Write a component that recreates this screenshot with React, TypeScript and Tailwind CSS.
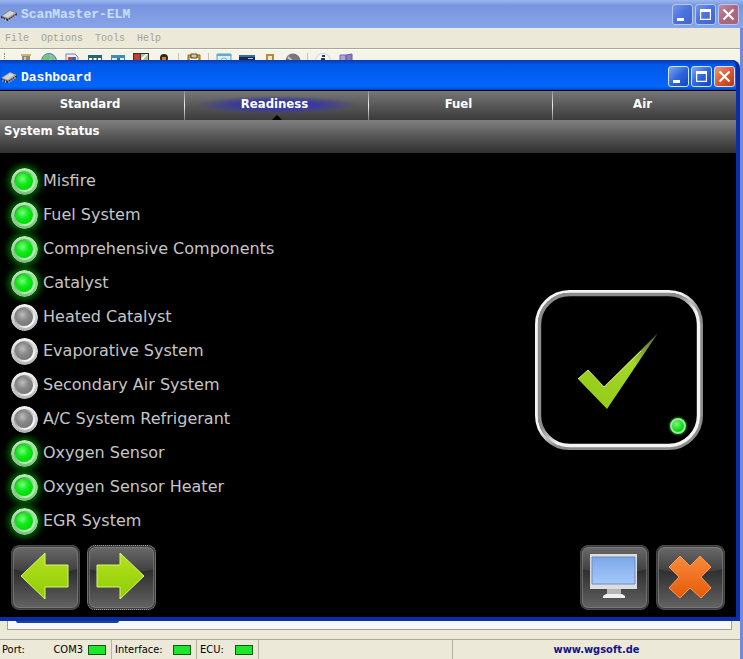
import React from 'react';
import clsx from 'clsx';

interface Monitor {
    label: string;
    ready: boolean;
}

const MONITORS: Monitor[] = [
    { label: 'Misfire', ready: true },
    { label: 'Fuel System', ready: true },
    { label: 'Comprehensive Components', ready: true },
    { label: 'Catalyst', ready: true },
    { label: 'Heated Catalyst', ready: false },
    { label: 'Evaporative System', ready: false },
    { label: 'Secondary Air System', ready: false },
    { label: 'A/C System Refrigerant', ready: false },
    { label: 'Oxygen Sensor', ready: true },
    { label: 'Oxygen Sensor Heater', ready: true },
    { label: 'EGR System', ready: true },
];

const TABS = ['Standard', 'Readiness', 'Fuel', 'Air'];
const MENUS = ['File', 'Options', 'Tools', 'Help'];

const ChipIcon: React.FC = () => (
    <svg viewBox="0 0 16 16" className="h-4 w-4 shrink-0">
        <path d="m0 9 9-6 7 3v2l-9 6-7-3z" fill="#2c2c30" />
        <path d="m0 9 9-6 7 3-9 6z" fill="#a4a7ac" />
        <path d="m2 9 7-5 4.500 2L7 10.500z" fill="#d3d5d9" />
        <path d="M2 10.500v2M4.500 11.500v2M8 12v2M10 10.700v2M12 9.400v2M14 8v2" stroke="#e0e0e0" strokeWidth=".9" />
    </svg>
);

const CAPTION_ICONS = {
    minimize: <path d="M5 14h7v3H5z" fill="#fff" />,
    maximize: <path d="M5 5h11v11H5zM6.200 8v6.800h8.600V8z" fill="#fff" fillRule="evenodd" />,
    close: <path d="m5.500 5.500 10 10m0-10-10 10" stroke="#fff" strokeWidth="2.200" />,
};

interface CaptionButtonsProps {
    active?: boolean;
}

const CaptionButtons: React.FC<CaptionButtonsProps> = ({ active = false }) => (
    <div className="ml-auto flex gap-0.5">
        {(['minimize', 'maximize', 'close'] as const).map(kind => (
            <button
                key={kind}
                type="button"
                aria-label={kind}
                className={clsx(
                    'h-[21px] w-[21px] overflow-hidden rounded-[3px] border',
                    active ? 'border-[#d5e4ff]' : 'border-[#b6c8f4]',
                    kind === 'close'
                        ? active
                            ? 'bg-linear-to-br from-[#ee9478] via-[#dd5935] to-[#b8350f]'
                            : 'bg-linear-to-br from-[#bb8ca5] via-[#b0657a] to-[#a3647c]'
                        : active
                            ? 'bg-linear-to-br from-[#7da5f4] via-[#2f66dc] to-[#1244c0]'
                            : 'bg-linear-to-br from-[#7396e9] via-[#4a72e0] to-[#4266c4]'
                )}
            >
                <svg viewBox="1 1 19 19" className="h-[19px] w-[19px]">{CAPTION_ICONS[kind]}</svg>
            </button>
        ))}
    </div>
);

const TOOL_GROUPS = [
    [
        { name: 'Connect', art: <><path d="M4 3h8v13H4z" fill="#8c887e" /><path d="M6 4h2v12H6z" fill="#c9c6bc" /><path d="M3 1h10v2H3z" fill="#c9b76a" /></> },
        { name: 'Internet', art: <><circle cx="8" cy="8" r="7.500" fill="#8fbde0" stroke="#52779b" /><path d="M2 6c2-5 5-3 6-4l2 3-4 3zM11 2l3 4-3 1z" fill="#79c45e" /></> },
        { name: 'Report', art: <><path d="M2 1h9l3 3v12H2z" fill="#e8effb" stroke="#7a83a0" /><path d="M4 4h4v5H4z" fill="#c04a40" /><path d="M8 4h4v5H8z" fill="#3d65ad" /></> },
        { name: 'Gauges', art: <><path d="M1 2h14v14H1z" fill="#24656f" /><path d="M2 5h3v3H2zM6.500 5h3v3h-3zM11 5h3v3h-3z" fill="#fff" /></> },
        { name: 'Graph', art: <><path d="M1 2h14v14H1z" fill="#3d8eb1" /><path d="M2 5h12v8H2z" fill="#d4eff5" /><path d="M7 5h3v3H7z" fill="#31788f" /></> },
        { name: 'Monitors', art: <><path d="M0 0h16v16H0z" fill="#442a28" /><path d="M1 1h6v6H1z" fill="#c33d32" /><path d="M8 1h7v7H8z" fill="#9cca91" /><path d="m8 5 5-4h2L9 8z" fill="#eef5e9" /></> },
        { name: 'Driver', art: <><circle cx="8" cy="5" r="4" fill="#2f2722" /><path d="M6 4h4v4H6zM3 9h9v6H3z" fill="#d47c34" /></> },
    ],
    [
        { name: 'Clipboard', art: <><path d="M2 2h12v14H2z" fill="#d49a39" stroke="#8b6327" /><path d="M4 5h8v9H4z" fill="#f4f4f4" /><path d="M5 1h6v4H5z" fill="#d8c89a" stroke="#554a33" /></> },
    ],
    [
        { name: 'Search', art: <><path d="M1 1h14v14H1z" fill="#d5edf5" stroke="#5a9fba" /><path d="M1 1h14v2H1z" fill="#68a8c8" /><circle cx="8" cy="8" r="3" fill="#edf6f8" stroke="#7eb6c5" /></> },
        { name: 'Terminal', art: <><path d="M0 2h16v12H0z" fill="#132b4c" /><path d="M0 2h16v2H0z" fill="#386ba0" /><path d="M9 5h5v1H9z" fill="#bacbdd" /></> },
        { name: 'Device', art: <><path d="M4 1h8v14H4z" fill="#b38b43" /><path d="M6 3h4v6H6z" fill="#f3e6bc" /></> },
        { name: 'Stop', art: <><circle cx="8" cy="8" r="7.500" fill="#77777c" /><path d="m3 4 9 9" stroke="#c5c5c8" strokeWidth="2" /></> },
    ],
    [
        { name: 'About', art: <><circle cx="8" cy="8" r="7.500" fill="#f4f7fa" stroke="#cbd1da" /><path d="M7 2h3v2H7zM6 5h4v7H6z" fill="#263c62" /></> },
        { name: 'Exit', art: <><path d="M2 2h6v13H2z" fill="#aaa3dc" stroke="#7265ab" /><path d="m8 2 6-1v14l-6-1z" fill="#8a7cc7" stroke="#6559a0" /></> },
    ],
];

const Toolbar: React.FC = () => (
    <div className="flex h-[11px] items-start overflow-hidden border-t border-white bg-[#f5f4e9] pt-[3px]">
        <span className="mr-2 ml-1 h-4 w-0.5 border-l border-dotted border-[#8c8c84]" />
        {TOOL_GROUPS.map((group, i) => (
            <React.Fragment key={i}>
                {i > 0 && <span className="mx-[3px] h-4 w-px shrink-0 bg-[#c5c2b2]" />}
                {group.map(tool => (
                    <button key={tool.name} type="button" aria-label={tool.name} className="flex w-[23px] shrink-0 justify-center">
                        <svg viewBox="0 0 16 16" className="h-4 w-4">{tool.art}</svg>
                    </button>
                ))}
            </React.Fragment>
        ))}
    </div>
);

const LED_COLORS = {
    on: { rim: ['#aef2ae', '#7fc080'], groove: ['#4fa052', '#c0ffc0'], lens: ['#7dff7d', '#12ea1e', '#00dc0a'] },
    off: { rim: ['#f4f4f4', '#b4b4b4'], groove: ['#808080', '#ffffff'], lens: ['#bdbdbd', '#8a8a8a', '#7a7a7a'] },
};

const Led: React.FC<{ on: boolean }> = ({ on }) => {
    const state = on ? 'on' : 'off';
    const { rim, groove, lens } = LED_COLORS[state];

    return (
        <svg
            viewBox="0 0 27 27"
            className={clsx('h-[27px] w-[27px] shrink-0 rounded-full', on && 'shadow-[0_0_7px_2px_#087c08]')}
        >
            <defs>
                <linearGradient id={`rim-${state}`} x2="0" y2="1">
                    <stop stopColor={rim[0]} />
                    <stop offset="1" stopColor={rim[1]} />
                </linearGradient>
                <linearGradient id={`groove-${state}`} x2="1" y2="1">
                    <stop offset=".2" stopColor={groove[0]} />
                    <stop offset=".8" stopColor={groove[1]} />
                </linearGradient>
                <radialGradient id={`lens-${state}`} cx=".4" cy=".36" r=".6">
                    <stop stopColor={lens[0]} />
                    <stop offset=".55" stopColor={lens[1]} />
                    <stop offset="1" stopColor={lens[2]} />
                </radialGradient>
            </defs>
            <circle cx="13.500" cy="13.500" r="13.500" fill={`url(#rim-${state})`} />
            <circle cx="13.500" cy="13.500" r="10.500" fill={`url(#groove-${state})`} />
            <circle cx="13.200" cy="13.200" r="8.800" fill={`url(#lens-${state})`} />
        </svg>
    );
};

interface ActionButtonProps {
    label: string;
    focused?: boolean;
    children: React.ReactNode;
}

const ActionButton: React.FC<ActionButtonProps> = ({ label, focused = false, children }) => (
    <button
        type="button"
        aria-label={label}
        className={clsx(
            'h-[65px] w-[69px] overflow-hidden rounded-lg border bg-[#3c3c3c] p-px',
            focused ? 'border-dotted border-[#a0a0a0]' : 'border-[#4b4b4b]'
        )}
    >
        <svg viewBox="0 0 65 61" className="h-[61px] w-[65px] rounded-md">
            <defs>
                <linearGradient id="gloss" x2="0" y2="1">
                    <stop stopColor="#6a6a6a" />
                    <stop offset="1" stopColor="#3b3b3b" />
                </linearGradient>
                <linearGradient id="base" x2="0" y2="1">
                    <stop stopColor="#262626" />
                    <stop offset=".4" stopColor="#303030" />
                    <stop offset="1" stopColor="#636363" />
                </linearGradient>
                <linearGradient id="lime" x2="0" y2="1">
                    <stop stopColor="#b4e21c" />
                    <stop offset="1" stopColor="#8fcc08" />
                </linearGradient>
                <linearGradient id="orange" x2="0" y2="1">
                    <stop stopColor="#f88a3c" />
                    <stop offset="1" stopColor="#e65a08" />
                </linearGradient>
                <linearGradient id="screen" x2="0" y2="1">
                    <stop stopColor="#7ba8e9" />
                    <stop offset="1" stopColor="#a6c8fa" />
                </linearGradient>
            </defs>
            <path d="M0 0h65v61H0z" fill="url(#base)" />
            <path d="M0 0h65v22Q32 31 0 22z" fill="url(#gloss)" />
            <rect x=".5" y=".5" width="64" height="60" rx="6" fill="none" stroke="#858585" strokeOpacity=".6" />
            {children}
        </svg>
    </button>
);

const Dashboard: React.FC = () => (
    <section className="overflow-hidden rounded-tr-lg border-r-4 border-b-4 border-[#0a2da8] bg-black">
        <header className="-mr-1 flex h-[30px] items-center bg-linear-to-b from-[#0a3aa8] via-[#0058ea] via-15% to-[#0568ff] pt-[3px] pr-[5px] pl-px shadow-[inset_0_-2px_2px_#0748ce]">
            <ChipIcon />
            <h2 className="ml-1 pt-0.5 font-['Liberation_Mono',monospace] text-[13px] font-bold text-white">Dashboard</h2>
            <CaptionButtons active />
        </header>

        <nav className="grid h-[30px] grid-cols-4 border-t border-black bg-linear-to-b from-[#777777] to-[#3b3b3b]">
            {TABS.map((tab, i) => (
                <button
                    key={tab}
                    type="button"
                    className={clsx(
                        'relative pr-1 pb-1 text-center text-[13px] font-bold text-white',
                        i > 0 && 'border-l [border-image:linear-gradient(#8a8a8a,#f0f0f0_50%,#777777)_1]',
                        tab === 'Readiness' && 'bg-[radial-gradient(ellipse_82px_9px_at_50%_48%,#3431ad_0%,#3c3a99_50%,transparent_100%)]'
                    )}
                >
                    {tab}
                    {tab === 'Readiness' && (
                        <svg viewBox="0 0 10 5" className="absolute bottom-0 left-1/2 h-[5px] w-2.5 -translate-x-1/2">
                            <path d="m0 5 5-5 5 5z" fill="#000" />
                        </svg>
                    )}
                </button>
            ))}
        </nav>

        <h3 className="h-[33px] bg-linear-to-b from-[#808080] to-[#303030] pl-1 text-[13px] leading-[21px] font-bold text-white">
            System Status
        </h3>

        <div className="flex items-start justify-between pt-[11px] pr-[33px] pl-[11px]">
            <ul className="font-['DejaVu_Sans',sans-serif] text-[16px] text-[#c6c6c6]">
                {MONITORS.map(monitor => (
                    <li key={monitor.label} className="flex h-[34px] items-center gap-[5px]">
                        <Led on={monitor.ready} />
                        <span>{monitor.label}</span>
                    </li>
                ))}
            </ul>
            <svg viewBox="0 0 168 160" role="img" aria-label="Ready" className="mt-[126px] h-40 w-[168px]">
                <defs>
                    <linearGradient id="tick" x1="0" y1="1" x2="1" y2="0">
                        <stop stopColor="#92c914" />
                        <stop offset=".65" stopColor="#a3d62a" />
                        <stop offset="1" stopColor="#555b42" />
                    </linearGradient>
                    <radialGradient id="lamp" cx=".4" cy=".35">
                        <stop stopColor="#78f878" />
                        <stop offset="1" stopColor="#08d515" />
                    </radialGradient>
                    <linearGradient id="frame-outer" x2="1" y2="1">
                        <stop offset=".45" stopColor="#f4f4f4" />
                        <stop offset=".55" stopColor="#8c8c8c" />
                    </linearGradient>
                    <linearGradient id="frame-inner" x2="1" y2="1">
                        <stop offset=".45" stopColor="#8c8c8c" />
                        <stop offset=".55" stopColor="#f4f4f4" />
                    </linearGradient>
                </defs>
                <rect x="1.500" y="1.500" width="165" height="157" rx="33" fill="none" stroke="url(#frame-outer)" strokeWidth="3" />
                <rect x="4.500" y="4.500" width="159" height="151" rx="30" fill="none" stroke="url(#frame-inner)" strokeWidth="3.400" />
                <path d="m43 89 10-9 16 17 54-54-51 76z" fill="url(#tick)" />
                <path d="m43 89 10-9 16 17 37-36" fill="none" stroke="#d3f47d" strokeWidth="1" />
                <circle cx="143" cy="136" r="9.500" fill="#087a14" opacity=".6" />
                <circle cx="143" cy="136" r="7" fill="url(#lamp)" stroke="#98e998" strokeWidth="2" />
            </svg>
        </div>

        <footer className="mt-[7px] flex gap-[7px] px-[11px] pb-[7px]">
            <ActionButton label="Previous">
                <path d="m8 29 24-23v12h23v22H32v12z" fill="url(#lime)" stroke="#d7f779" />
            </ActionButton>
            <ActionButton label="Next" focused>
                <path d="M55 29 31 6v12H8v22h23v12z" fill="url(#lime)" stroke="#d7f779" />
            </ActionButton>
            <span className="grow" />
            <ActionButton label="Fullscreen">
                <path d="M8 7h47v35H8z" fill="#dedede" />
                <path d="M10 10h43v27H10z" fill="url(#screen)" stroke="#6d8cc0" />
                <path d="M25 42h14v6H25z" fill="#b5b5b5" />
                <path d="M21 51v-2l3-2h16l3 2v2z" fill="#f0f0f0" />
            </ActionButton>
            <ActionButton label="Close dashboard">
                <path d="m22 9 10 10L42 9l11 11-10 10 10 11-10 10-11-10-10 10-11-10 10-11-10-10z" fill="url(#orange)" stroke="#ff9a55" />
            </ActionButton>
        </footer>
    </section>
);

const StatusLamp: React.FC = () => (
    <span className="h-2.5 w-[18px] border border-[#145414] bg-[#1be82b]" />
);

const StatusBar: React.FC = () => (
    <footer className="flex h-5 border-t border-[#aca899] text-[11px] text-black">
        <div className="flex w-28 items-center border-r border-[#b5b2a3] pt-px pr-[5px] pl-0.5">
            <span>Port:</span>
            <span className="mr-[5px] ml-auto">COM3</span>
            <StatusLamp />
        </div>
        <div className="flex w-[85px] items-center justify-between border-r border-[#b5b2a3] pt-px pr-[5px] pl-[3px]">
            <span>Interface:</span>
            <StatusLamp />
        </div>
        <div className="flex w-[62px] items-center justify-between border-r border-[#b5b2a3] pt-px pr-[5px] pl-[3px]">
            <span>ECU:</span>
            <StatusLamp />
        </div>
        <div className="w-[194px] border-r border-[#b5b2a3]" />
        <div className="grow text-center">
            <a href="#wgsoft" className="text-[11px] leading-[19px] font-bold text-[#14148a]">www.wgsoft.de</a>
        </div>
    </footer>
);

export default function App() {
    return (
        <main className="min-h-screen border-r-[3px] border-[#7189dd] bg-[#ece9d8] font-['DejaVu_Sans_Condensed','Noto_Sans',sans-serif]">
            <header className="-mr-[3px] flex h-7 items-center bg-linear-to-b from-[#9ab7f0] via-[#7994df] via-20% to-[#87a5ea] pt-px pr-1 pl-px">
                <ChipIcon />
                <h1 className="ml-1 font-['Liberation_Mono',monospace] text-[13px] font-bold text-[#c8e0fc]">ScanMaster-ELM</h1>
                <CaptionButtons />
            </header>
            <nav className="flex h-[21px] items-center gap-3 border-b border-[#aaa797] pl-[5px] font-['Liberation_Mono',monospace] text-[10px] text-[#a5a294]">
                {MENUS.map(menu => (
                    <button key={menu} type="button">{menu}</button>
                ))}
            </nav>
            <Toolbar />
            <Dashboard />
            <div className="mr-2 mb-[9px] ml-[7px] h-[9px] border-r border-b border-l border-[#a3a196] bg-[#f8f8f6] pl-2">
                <div className="h-0.5 w-[103px] rounded-b-sm bg-[#1747a7]" />
            </div>
            <StatusBar />
        </main>
    );
}
